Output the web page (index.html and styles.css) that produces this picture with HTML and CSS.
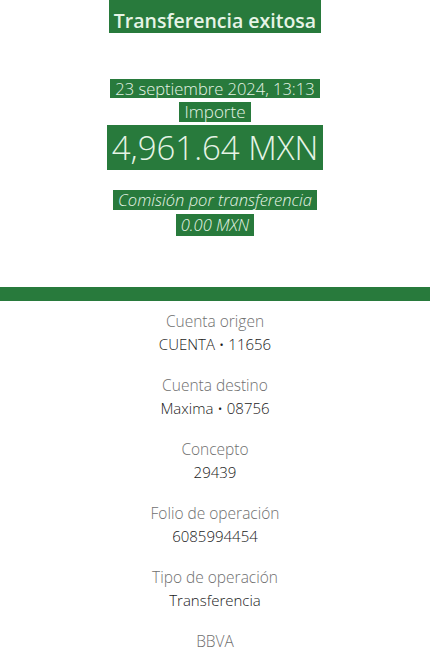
FILE: index.html
```html
<!DOCTYPE html>
<html lang="es">
<head>
<meta charset="utf-8">
<link rel="stylesheet" href="styles.css">
</head>
<body>
<div class="page">
  <section class="summary">
    <span class="hl title">Transferencia exitosa</span>
    <span class="hl date">23 septiembre 2024, 13:13</span>
    <span class="hl importe">Importe</span>
    <span class="hl amount">4,961.64 MXN</span>
    <span class="hl fee">Comisión por transferencia</span>
    <span class="hl fee-val">0.00 MXN</span>
  </section>
  <div class="bar"></div>
  <section class="details">
    <div class="item"><div class="label">Cuenta origen</div><div class="value">CUENTA • 11656</div></div>
    <div class="item"><div class="label">Cuenta destino</div><div class="value">Maxima • 08756</div></div>
    <div class="item"><div class="label">Concepto</div><div class="value">29439</div></div>
    <div class="item"><div class="label">Folio de operación</div><div class="value">6085994454</div></div>
    <div class="item"><div class="label">Tipo de operación</div><div class="value">Transferencia</div></div>
    <div class="item"><div class="label">BBVA</div></div>
  </section>
</div>
</body>
</html>
```
FILE: styles.css
```css
html, body {
  margin: 0;
  padding: 0;
  background: #ffffff;
}
body {
  font-family: "Open Sans", "Liberation Sans", sans-serif;
  width: 430px;
  height: 661px;
  overflow: hidden;
}
.summary {
  display: flex;
  flex-direction: column;
  align-items: center;
}
.hl {
  display: inline-block;
  background: #287a3c;
  color: #e6f4e6;
  padding: 0 5px;
  white-space: nowrap;
}
.title {
  font-weight: 600;
  font-size: 19.5px;
  line-height: 24px;
  padding-top: 9px;
}
.date {
  margin-top: 46px;
  font-size: 16.5px;
  font-weight: 300;
  line-height: 19px;
}
.importe {
  margin-top: 4px;
  font-size: 17px;
  font-weight: 300;
  line-height: 20px;
}
.amount {
  margin-top: 3px;
  font-size: 33px;
  font-weight: 300;
  line-height: 45px;
}
.fee {
  margin-top: 20px;
  font-size: 16.5px;
  font-weight: 300;
  font-style: italic;
  line-height: 20px;
}
.fee-val {
  margin-top: 4px;
  font-size: 16.5px;
  font-weight: 300;
  font-style: italic;
  line-height: 22px;
}
.bar {
  margin-top: 51px;
  height: 14px;
  background: #287a3c;
}
.details {
  display: flex;
  flex-direction: column;
  align-items: center;
  padding-top: 10px;
  gap: 21px;
}
.item {
  display: flex;
  flex-direction: column;
  align-items: center;
  gap: 3px;
}
.label {
  font-size: 15.5px;
  font-weight: 300;
  line-height: 20px;
  color: #6f6f6f;
}
.value {
  font-size: 15px;
  font-weight: 300;
  line-height: 20px;
  color: #1a1a1a;
}
```
